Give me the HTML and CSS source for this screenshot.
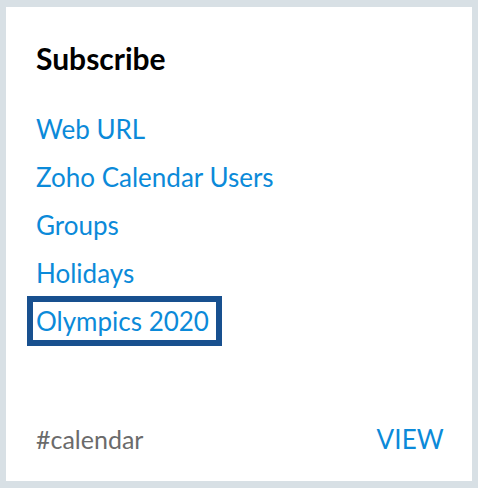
FILE: index.html
```html
<!DOCTYPE html>
<html>
<head>
<meta charset="utf-8">
<link rel="stylesheet" href="styles.css">
</head>
<body>
<div class="card">
  <h2 class="title">Subscribe</h2>
  <ul class="links">
    <li><a class="link">Web URL</a></li>
    <li><a class="link">Zoho Calendar Users</a></li>
    <li><a class="link">Groups</a></li>
    <li><a class="link">Holidays</a></li>
    <li><a class="link focused">Olympics 2020</a></li>
  </ul>
  <div class="footer">
    <span class="tag">#calendar</span>
    <a class="view">VIEW</a>
  </div>
</div>
</body>
</html>
```
FILE: styles.css
```css
html, body {
  margin: 0;
  padding: 0;
  background: #d8e0e5;
}
body {
  padding: 7px 6px;
  font-family: Lato, "Open Sans", sans-serif;
}
.card {
  width: 466px;
  height: 474px;
  box-sizing: border-box;
  background: #fff;
  padding: 34px 30px 0 30px;
  display: flex;
  flex-direction: column;
}
.title {
  margin: 0;
  font-size: 30px;
  font-weight: 700;
  line-height: 34px;
  color: #000;
}
.links {
  list-style: none;
  margin: 38px 0 0 0;
  padding: 0;
  display: flex;
  flex-direction: column;
  gap: 16px;
}
.link {
  display: inline-block;
  font-size: 26px;
  line-height: 32px;
  color: #0b8ad9;
}
.focused {
  outline: 6px solid #18508f;
  outline-offset: 3px;
  padding: 0 4px 0 0;
}
.footer {
  margin-top: auto;
  margin-bottom: 26px;
  display: flex;
  justify-content: space-between;
  align-items: baseline;
  font-size: 25px;
  line-height: 32px;
}
.tag {
  color: #6b6b6b;
}
.view {
  color: #0b8ad9;
  font-size: 26px;
  letter-spacing: 0.2px;
  margin-right: -2px;
}
```
